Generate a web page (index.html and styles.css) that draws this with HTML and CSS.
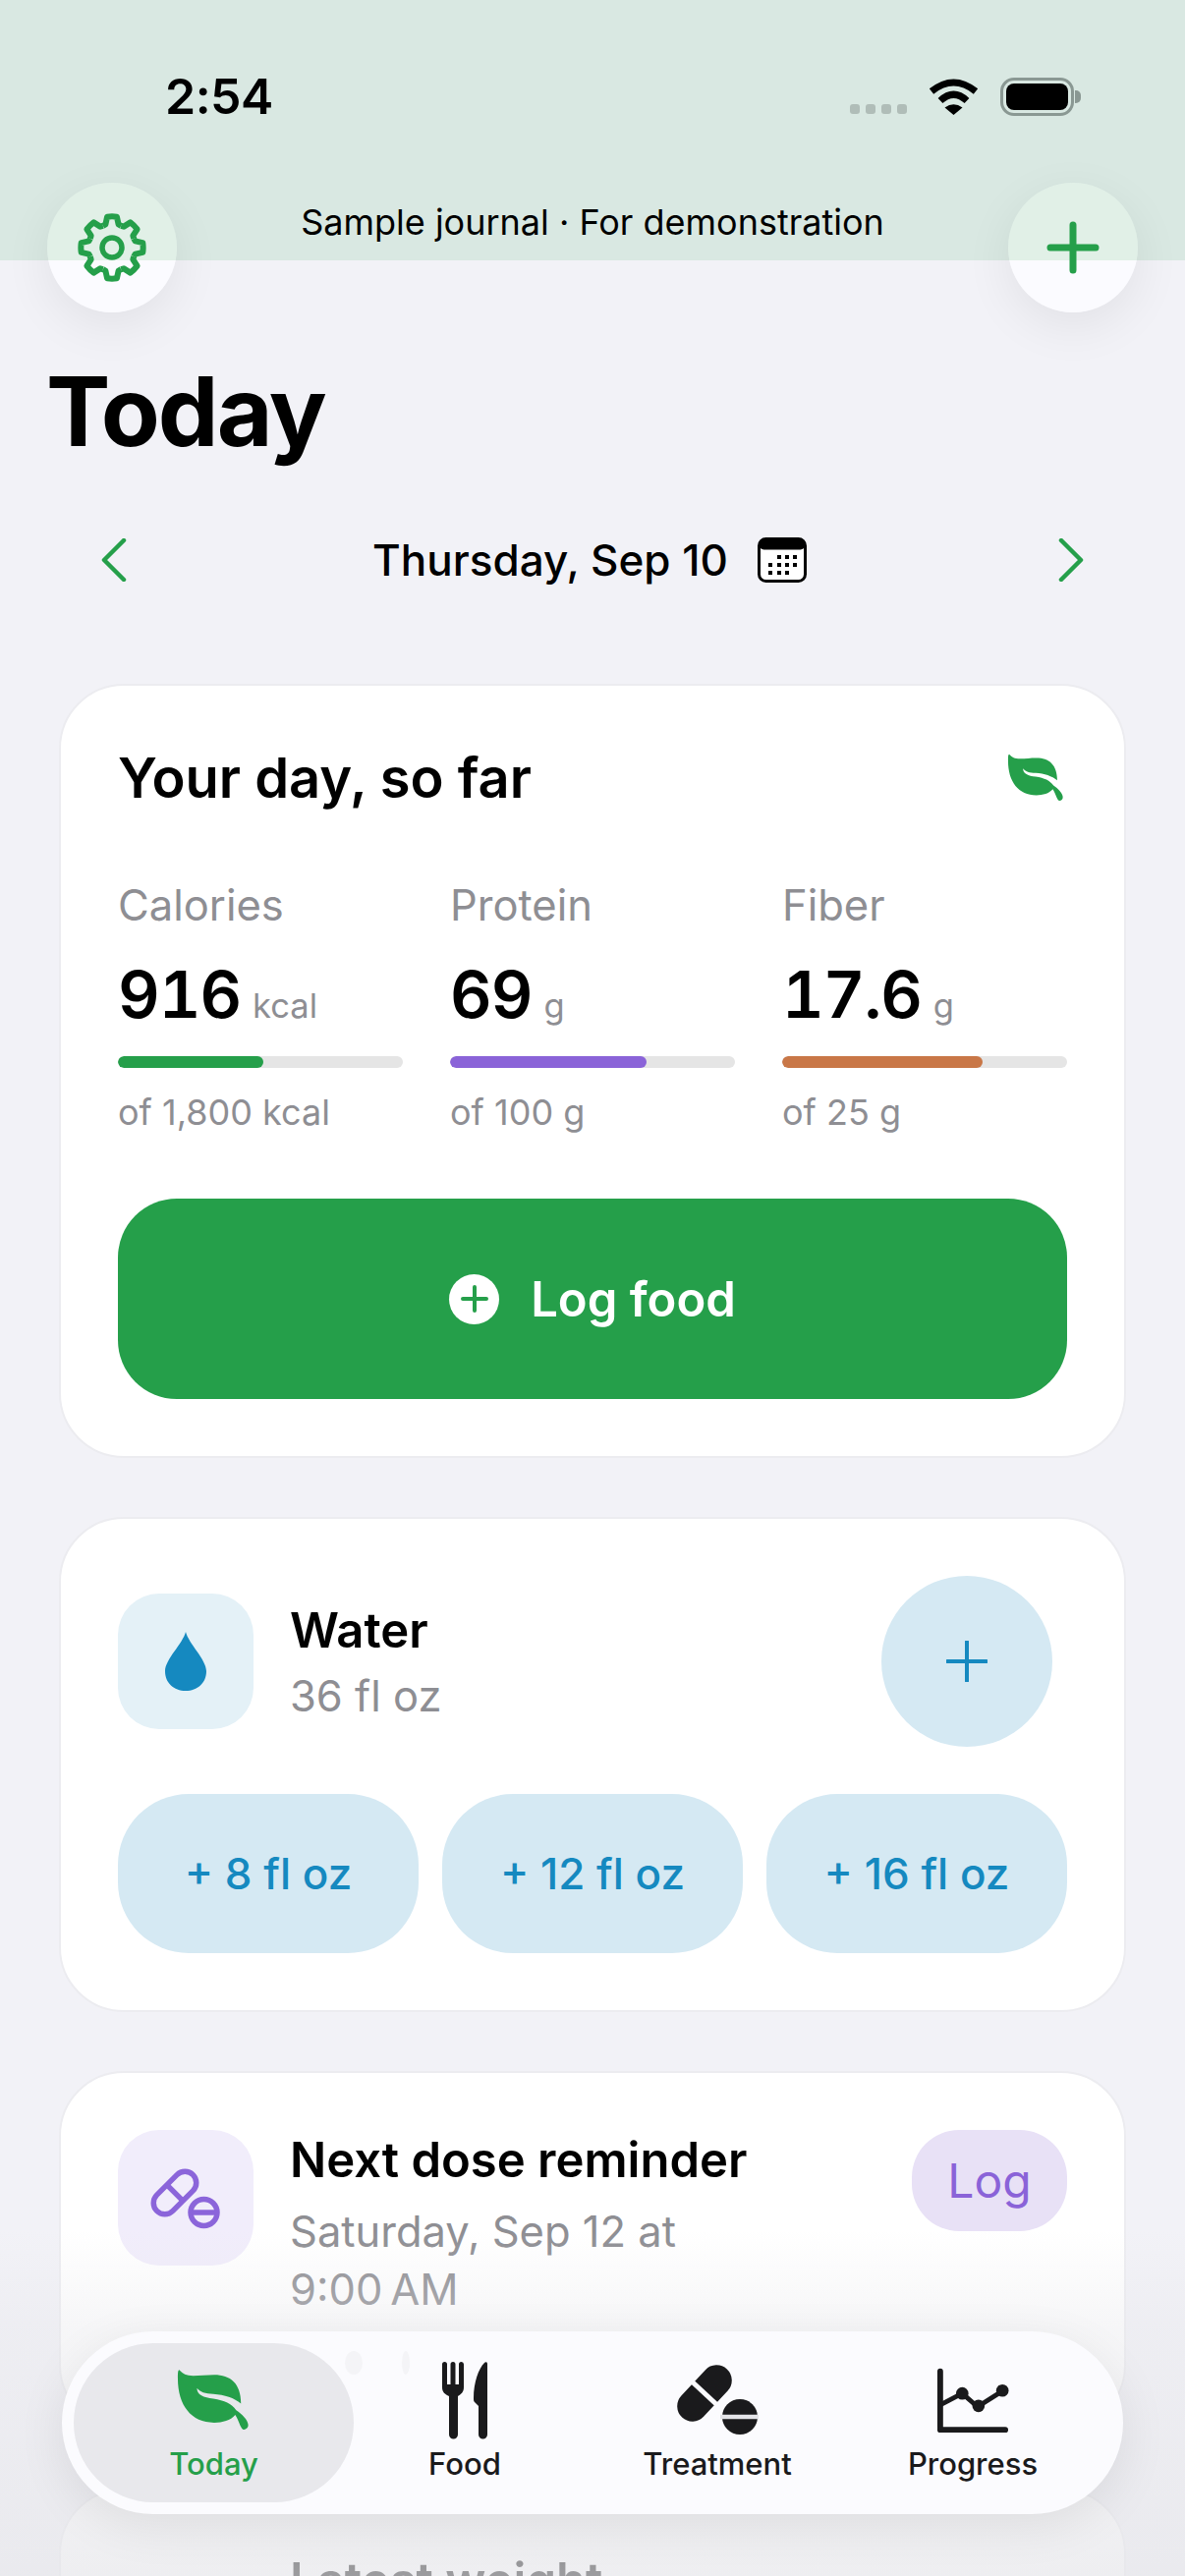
FILE: index.html
```html
<!DOCTYPE html>
<html lang="en">
<head>
<meta charset="utf-8">
<title>Today</title>
<link rel="stylesheet" href="styles.css">
</head>
<body>
<div class="screen">
  <header class="status">
    <span class="time">2:54</span>
    <div class="status-icons">
      <span class="signal"><i></i><i></i><i></i><i></i></span>
      <svg class="wifi" width="51" height="38" viewBox="0 0 51 38"><path d="M3 14Q25.500-4 48 14M12 23.500Q25.500 11 39 23.500" fill="none" stroke="#000" stroke-width="7"/><path d="M16.500 30.500Q25.500 24 34.500 30.500L25.500 38Z" fill="#000"/></svg>
      <span class="battery"><i></i></span>
      <span class="battery-nub"></span>
    </div>
  </header>

  <nav class="topnav">
    <button class="round-btn">
      <svg width="72" height="72" viewBox="-36 -36 72 72" fill="none" stroke="#259f4a" stroke-width="6" stroke-linejoin="round">
        <defs><path id="tooth" d="M-9.200-22.200L-6.600-23.600-4.900-31.300Q0-32 4.900-31.300L6.600-23.600 9.200-22.200"/></defs>
        <use href="#tooth"/><use href="#tooth" transform="rotate(45)"/><use href="#tooth" transform="rotate(90)"/><use href="#tooth" transform="rotate(135)"/><use href="#tooth" transform="rotate(180)"/><use href="#tooth" transform="rotate(225)"/><use href="#tooth" transform="rotate(270)"/><use href="#tooth" transform="rotate(315)"/>
        <circle r="10" stroke-width="5.500"/>
      </svg>
    </button>
    <p class="demo-note">Sample journal · For demonstration</p>
    <button class="round-btn">
      <svg width="54" height="54" viewBox="0 0 54 54"><path d="M27 4V50M4 27H50" stroke="#259f4a" stroke-width="7" stroke-linecap="round"/></svg>
    </button>
  </nav>

  <h1 class="page-title">Today</h1>

  <div class="date-row">
    <svg width="26" height="44" viewBox="0 0 26 44"><path d="M23 2L3 22 23 42" fill="none" stroke="#259f4a" stroke-width="4.500" stroke-linecap="round" stroke-linejoin="round"/></svg>
    <div class="date-center">
      <span class="date-text">Thursday, Sep 10</span>
      <svg width="50" height="46" viewBox="0 0 50 46">
        <rect x="1.500" y="1.500" width="47" height="43" rx="7" fill="#fff" stroke="#000" stroke-width="3"/>
        <rect x="1.500" y="1.500" width="47" height="11" rx="5" fill="#000"/>
        <g fill="#000"><rect x="20" y="18" width="4" height="4"/><rect x="28" y="18" width="4" height="4"/><rect x="36" y="18" width="4" height="4"/><rect x="11" y="26" width="4" height="4"/><rect x="20" y="26" width="4" height="4"/><rect x="28" y="26" width="4" height="4"/><rect x="36" y="26" width="4" height="4"/><rect x="11" y="34" width="4" height="4"/><rect x="20" y="34" width="4" height="4"/><rect x="28" y="34" width="4" height="4"/></g>
      </svg>
    </div>
    <svg width="26" height="44" viewBox="0 0 26 44"><path d="M3 2L23 22 3 42" fill="none" stroke="#259f4a" stroke-width="4.500" stroke-linecap="round" stroke-linejoin="round"/></svg>
  </div>

  <main class="cards">
    <section class="card">
      <div class="card-head">
        <h2 class="card-title">Your day, so far</h2>
        <svg class="head-leaf" width="58" height="50" viewBox="0 0 76 66"><path fill="#259f4a" d="M2.500 1C6 5 10 7 17 7 24 7 31 6 39 6 56 6 67 15 67 36 60 30 50 27 38 26 30 26 24 24 21 20 21 27 28 30 38 31 50 33 57 36 62 43 68 47 74 53 74.500 58 75 62 71 64 69 63 66 61 65 54 61 48 56 54 48 56 39 56 15 56 1 38 1 10 1 5 1 1 2.500 1Z"/></svg>
      </div>
      <div class="stats">
        <div class="stat">
          <div class="stat-label">Calories</div>
          <div class="stat-value">916<span class="stat-unit">kcal</span></div>
          <div class="track"><div class="fill fill-green" style="width:50.9%"></div></div>
          <div class="stat-sub">of 1,800 kcal</div>
        </div>
        <div class="stat">
          <div class="stat-label">Protein</div>
          <div class="stat-value">69<span class="stat-unit">g</span></div>
          <div class="track"><div class="fill fill-purple" style="width:69%"></div></div>
          <div class="stat-sub">of 100 g</div>
        </div>
        <div class="stat">
          <div class="stat-label">Fiber</div>
          <div class="stat-value">17.6<span class="stat-unit">g</span></div>
          <div class="track"><div class="fill fill-orange" style="width:70.4%"></div></div>
          <div class="stat-sub">of 25 g</div>
        </div>
      </div>
      <button class="log-food">
        <span class="log-plus"><svg width="28" height="28" viewBox="0 0 28 28"><path d="M14 2V26M2 14H26" stroke="#259f4a" stroke-width="4" stroke-linecap="round"/></svg></span>
        Log food
      </button>
    </section>

    <section class="card">
      <div class="water-row">
        <div class="tile tile-blue">
          <svg width="42" height="60" viewBox="0 0 42 60"><path fill="#1589c0" d="M21 0C24 12 42 28 42 40 42 52 33 60 21 60 9 60 0 52 0 40 0 28 18 12 21 0Z"/></svg>
        </div>
        <div class="row-text water-text">
          <div class="row-title">Water</div>
          <div class="row-sub">36 fl oz</div>
        </div>
        <button class="water-add">
          <svg width="42" height="42" viewBox="0 0 42 42"><path d="M21 1V41M1 21H41" stroke="#1589c0" stroke-width="4" stroke-linecap="round"/></svg>
        </button>
      </div>
      <div class="chips">
        <button class="chip">+ 8 fl oz</button>
        <button class="chip">+ 12 fl oz</button>
        <button class="chip">+ 16 fl oz</button>
      </div>
    </section>

    <section class="card card-dose">
      <div class="tile tile-purple">
        <svg width="72" height="72" viewBox="0 0 72 72" fill="none" stroke="#8b65da" stroke-width="5.500">
          <g transform="translate(25 31) rotate(-45)"><rect x="-26" y="-11.500" width="52" height="23" rx="11.500"/><path d="M0-11.500V11.500"/></g>
          <circle cx="54.500" cy="51" r="13.500"/><path d="M41 51H68"/>
        </svg>
      </div>
      <div class="row-text dose-text">
        <div class="row-title">Next dose reminder</div>
        <div class="row-sub dose-sub">Saturday, Sep 12 at<br>9:00&#8239;AM</div>
      </div>
      <button class="log-pill">Log</button>
    </section>

    <section class="card card-weight">
      <div class="row-title">Latest weight</div>
    </section>
  </main>

  <div class="fade"></div>

  <nav class="tabbar">
    <i class="ghost ghost-a"></i><i class="ghost ghost-b"></i>
    <a class="tab tab-today">
      <span class="tab-icon"><svg class="tab-leaf" width="74" height="65" viewBox="0 0 76 66"><path fill="#259f4a" d="M2.500 1C6 5 10 7 17 7 24 7 31 6 39 6 56 6 67 15 67 36 60 30 50 27 38 26 30 26 24 24 21 20 21 27 28 30 38 31 50 33 57 36 62 43 68 47 74 53 74.500 58 75 62 71 64 69 63 66 61 65 54 61 48 56 54 48 56 39 56 15 56 1 38 1 10 1 5 1 1 2.500 1Z"/></svg></span>
      <span class="tab-label">Today</span>
    </a>
    <a class="tab tab-food">
      <span class="tab-icon"><svg width="48" height="80" viewBox="0 0 48 80"><path fill="#1a1a1c" d="M1 3.500A2.500 2.500 0 0 1 6 3.500V24H9.500V3.500A2.500 2.500 0 0 1 14.500 3.500V24H18V3.500A2.500 2.500 0 0 1 23 3.500V27C23 32 20 34 17 36V75A4.500 4.500 0 0 1 8 75V36C4 34 1 32 1 27Z"/><path fill="#1a1a1c" d="M47 3V75A4.500 4.500 0 0 1 38 75V46L34 42C33 41 33 40 33 38 33 22 38 8 44 2 45 1 47 1 47 3Z"/></svg></span>
      <span class="tab-label">Food</span>
    </a>
    <a class="tab tab-treat">
      <span class="tab-icon"><svg width="84" height="72" viewBox="0 0 84 72">
        <g transform="translate(29 29) rotate(-47)"><rect x="-33.500" y="-15.500" width="67" height="31" rx="15.500" fill="#1a1a1c"/><path d="M0-18V18" stroke="#fbfbfe" stroke-width="5"/></g>
        <circle cx="65" cy="53" r="18" fill="#1a1a1c"/><path d="M45 53H85" stroke="#e4e4e8" stroke-width="4.500"/>
      </svg></span>
      <span class="tab-label">Treatment</span>
    </a>
    <a class="tab tab-prog">
      <span class="tab-icon"><svg width="74" height="68" viewBox="0 0 76 68">
        <path d="M4 4V65H72" fill="none" stroke="#1a1a1c" stroke-width="6" stroke-linecap="round" stroke-linejoin="round"/>
        <path d="M4 39L27 27 43 41 68 25" fill="none" stroke="#1a1a1c" stroke-width="5"/>
        <g fill="#1a1a1c"><circle cx="27" cy="27" r="6.500"/><circle cx="44" cy="40" r="6.500"/><circle cx="69" cy="24" r="6.500"/></g>
      </svg></span>
      <span class="tab-label">Progress</span>
    </a>
  </nav>
</div>
</body>
</html>
```

FILE: styles.css
```css
* { box-sizing: border-box; }
html, body { margin: 0; padding: 0; }
body { font-family: "Inter", "Noto Sans", sans-serif; color: #000; }
button { font-family: inherit; border: 0; padding: 0; }

.screen {
  position: relative;
  width: 1206px;
  height: 2622px;
  overflow: hidden;
  background: linear-gradient(#d9e8e2 265px, #f2f2f7 265px);
}

/* status bar */
.status {
  height: 186px;
  padding: 76px 106px 0 168px;
  display: flex;
  justify-content: space-between;
  align-items: flex-start;
}
.time { font-size: 50px; line-height: 44px; font-weight: 600; letter-spacing: -.5px; }
.status-icons { display: flex; align-items: flex-start; margin-top: 3px; }
.signal { display: flex; gap: 6px; margin-top: 27px; margin-right: 22px; }
.signal i { width: 10px; height: 10px; border-radius: 3px; background: #b0bdb8; }
.wifi { margin-right: 22px; }
.battery {
  width: 75px; height: 39px; padding: 3px;
  border: 3px solid #8a9893; border-radius: 14px;
  display: block;
}
.battery i { display: block; width: 100%; height: 100%; background: #000; border-radius: 8px; }
.battery-nub { width: 6px; height: 13px; margin-top: 13px; margin-left: 1px; background: #8a9893; border-radius: 0 5px 5px 0; }

/* top nav */
.topnav { height: 132px; padding: 0 48px; display: flex; justify-content: space-between; align-items: center; }
.round-btn {
  width: 132px; height: 132px; border-radius: 50%;
  display: flex; align-items: center; justify-content: center;
  background: linear-gradient(#e1f0e7 79px, #fbfbff 79px);
  box-shadow: 0 14px 50px rgba(0,0,0,.07);
}
.demo-note { margin: 0; align-self: flex-start; margin-top: 16px; font-size: 36px; line-height: 48px; }

.page-title { margin: 41px 0 0; padding-left: 47px; font-size: 98px; line-height: 120px; font-weight: 700; letter-spacing: -2px; }

.date-row { margin-top: 61px; height: 60px; padding: 0 103px 0 103px; display: flex; align-items: center; justify-content: space-between; }
.date-center { display: flex; align-items: center; gap: 30px; margin-right: 6px; }
.date-text { font-size: 44px; line-height: 60px; font-weight: 500; }

/* cards */
.cards { margin: 96px 60px 0; display: flex; flex-direction: column; gap: 60px; }
.card { background: #fff; border: 2px solid #ececf0; border-radius: 66px; padding: 58px; }

.card-head { display: flex; justify-content: space-between; align-items: center; height: 72px; }
.card-title { margin: 0; font-size: 56px; line-height: 72px; font-weight: 600; }
.head-leaf { margin-right: 3px; }

.stats { display: grid; grid-template-columns: repeat(3, 290px); gap: 48px; margin-top: 66px; }
.stat-label { font-size: 43.500px; line-height: 54px; color: #8e8e93; }
.stat-value { margin-top: 24px; font-size: 66px; line-height: 80px; font-weight: 600; font-variant-numeric: tabular-nums; letter-spacing: -1px; }
.stat-unit { margin-left: 12px; font-size: 34.500px; line-height: 1; font-weight: 400; letter-spacing: 0; color: #8e8e93; }
.track { margin-top: 23px; height: 12px; border-radius: 6px; background: #e5e5e5; overflow: hidden; }
.fill { height: 100%; border-radius: 6px; }
.fill-green { background: #259f4a; }
.fill-purple { background: #8a63d8; }
.fill-orange { background: #c97747; }
.stat-sub { margin-top: 21px; font-size: 36px; line-height: 48px; color: #8e8e93; }

.log-food {
  margin-top: 64px; width: 100%; height: 204px; border-radius: 60px;
  background: #259f4a; color: #fff;
  display: flex; align-items: center; justify-content: center; gap: 32px;
  font-size: 49px; font-weight: 600;
}
.log-plus { width: 51px; height: 51px; border-radius: 50%; background: #fff; display: flex; align-items: center; justify-content: center; }

.water-row { display: flex; align-items: center; height: 174px; }
.tile { width: 138px; height: 138px; border-radius: 42px; display: flex; align-items: center; justify-content: center; flex: none; }
.tile-blue { background: #e4f1f7; }
.tile-purple { background: #f1edfb; }
.row-text { margin-left: 37px; flex: 1; }
.water-text { padding-top: 3px; }
.row-title { font-size: 49px; line-height: 62px; font-weight: 600; }
.row-sub { margin-top: 6px; font-size: 43.500px; line-height: 59px; color: #8e8e93; }
.water-add { width: 174px; height: 174px; margin-right: 15px; border-radius: 50%; background: #d5e9f3; display: flex; align-items: center; justify-content: center; }

.chips { margin-top: 48px; display: grid; grid-template-columns: repeat(3, 1fr); gap: 24px; }
.chip { height: 162px; border-radius: 72px; background: #d5e9f3; color: #1589c0; font-size: 44px; font-weight: 500; }

.card-dose { display: flex; align-items: flex-start; min-height: 365px; }
.dose-sub { margin-top: 12px; }
.log-pill { width: 158px; height: 103px; border-radius: 48px; background: #e8e1f6; color: #8a63d8; font-size: 48px; }

.card-weight { padding: 61px 58px 58px 233px; }

/* bottom fade + tab bar */
.fade {
  position: absolute; left: 0; right: 0; bottom: 0; height: 352px;
  background: linear-gradient(rgba(230,230,234,0) 0, rgba(230,230,234,.36) 100px, rgba(230,230,234,.68) 100%);
}
.tabbar {
  position: absolute; left: 63px; bottom: 63px; width: 1080px; height: 186px;
  padding: 12px;
  display: grid; grid-template-columns: 285px 226px 288px 232px;
  background: #fbfbfe; border-radius: 93px;
  box-shadow: 0 12px 50px rgba(0,0,0,.08);
}
.tab { height: 162px; padding-top: 16px; display: flex; flex-direction: column; align-items: center; color: #1a1a1c; }
.tab-today { background: #e8e8ec; border-radius: 81px; color: #259f4a; }
.tab-icon { height: 84px; display: flex; align-items: center; justify-content: center; }
.tab-leaf { margin-right: 2px; }
.tab-label { margin-top: 3px; font-size: 31px; line-height: 40px; font-weight: 500; }
.ghost { position: absolute; top: 20px; width: 14px; height: 24px; border-radius: 50%; background: #f4f4f7; }
.ghost-a { left: 288px; width: 18px; }
.ghost-b { left: 346px; width: 8px; }
```
